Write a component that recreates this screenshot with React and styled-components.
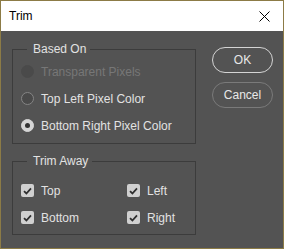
import styled, { createGlobalStyle } from 'styled-components';

const GlobalStyle = createGlobalStyle`
    html, body {
        margin: 0;
        padding: 0;
        background: #535353;
    }
    * {
        box-sizing: border-box;
    }
`;

const Window = styled.div`
    width: 284px;
    height: 249px;
    border: 1px solid #8c7b46;
    display: flex;
    flex-direction: column;
    font-family: 'Segoe UI', 'Liberation Sans', Arial, sans-serif;
    font-size: 12px;
    background: #535353;
`;

const TitleBar = styled.div`
    height: 30px;
    flex: none;
    background: #ffffff;
    display: flex;
    align-items: center;
    justify-content: space-between;
    padding: 0 9px 0 8px;
`;

const Title = styled.span`
    color: #000;
    font-size: 12px;
    line-height: 16px;
`;

const CloseButton = styled.button`
    width: 22px;
    height: 22px;
    border: none;
    background: none;
    padding: 0;
    display: flex;
    align-items: center;
    justify-content: center;
    margin-right: -1px;
`;

const Body = styled.div`
    flex: 1;
    display: flex;
    padding: 10px 10px 0 11px;
    gap: 16px;
`;

const Column = styled.div`
    width: 184px;
    display: flex;
    flex-direction: column;
    gap: 9px;
`;

const Group = styled.fieldset`
    margin: 0;
    border: 1px solid #3c3c3c;
    padding: ${(p) => p.$pad};
    min-inline-size: 0;
`;

const Legend = styled.legend`
    color: #e2e2e2;
    line-height: 16px;
    margin-left: 6px;
    padding: 0 4px 0 6px;
`;

const Row = styled.label`
    height: 27px;
    display: flex;
    align-items: center;
    gap: 7px;
    color: ${(p) => (p.$disabled ? '#777777' : '#e2e2e2')};
    white-space: nowrap;
`;

const Grid = styled.div`
    display: grid;
    grid-template-columns: 106px 1fr;
`;

const RadioDot = styled.span`
    width: 13px;
    height: 13px;
    border-radius: 50%;
    flex: none;
    display: flex;
    align-items: center;
    justify-content: center;
    border: 1px solid ${(p) => (p.$checked ? '#d6d6d6' : p.$disabled ? '#4a4a4a' : '#858585')};
    background: ${(p) => (p.$checked ? '#d6d6d6' : '#4a4a4a')};

    &::after {
        content: '';
        width: 5px;
        height: 5px;
        border-radius: 50%;
        background: #333;
        display: ${(p) => (p.$checked ? 'block' : 'none')};
    }
`;

const CheckBox = styled.span`
    width: 13px;
    height: 13px;
    border-radius: 2px;
    flex: none;
    background: #d0d0d0;
    display: flex;
    align-items: center;
    justify-content: center;
`;

const Buttons = styled.div`
    display: flex;
    flex-direction: column;
    gap: 9px;
    padding-top: 6px;
`;

const Button = styled.button`
    width: 61px;
    height: 26px;
    border-radius: 13px;
    background: transparent;
    border: 1.5px solid ${(p) => (p.$primary ? '#d4d4d4' : '#7a7a7a')};
    color: #e8e8e8;
    font-family: inherit;
    font-size: 12px;
    padding: 0;
`;

const Check = () => (
    <svg width="9" height="8" viewBox="0 0 9 8">
        <path d="M1 4.2 L3.4 6.5 L8 1.4" fill="none" stroke="#2f2f2f" strokeWidth="1.8" />
    </svg>
);

const Radio = ({ label, checked, disabled }) => (
    <Row $disabled={disabled}>
        <RadioDot $checked={checked} $disabled={disabled} />
        {label}
    </Row>
);

const CheckItem = ({ label }) => (
    <Row>
        <CheckBox>
            <Check />
        </CheckBox>
        {label}
    </Row>
);

export default function App() {
    return (
        <>
            <GlobalStyle />
            <Window>
                <TitleBar>
                    <Title>Trim</Title>
                    <CloseButton>
                        <svg width="11" height="11" viewBox="0 0 11 11">
                            <path d="M0.5 0.5 L10.5 10.5 M10.5 0.5 L0.5 10.5" stroke="#000" strokeWidth="1" />
                        </svg>
                    </CloseButton>
                </TitleBar>
                <Body>
                    <Column>
                        <Group $pad="1px 8px 4px 8px">
                            <Legend>Based On</Legend>
                            <Radio label="Transparent Pixels" disabled />
                            <Radio label="Top Left Pixel Color" />
                            <Radio label="Bottom Right Pixel Color" checked />
                        </Group>
                        <Group $pad="8px 8px 3px 8px">
                            <Legend>Trim Away</Legend>
                            <Grid>
                                <CheckItem label="Top" />
                                <CheckItem label="Left" />
                                <CheckItem label="Bottom" />
                                <CheckItem label="Right" />
                            </Grid>
                        </Group>
                    </Column>
                    <Buttons>
                        <Button $primary>OK</Button>
                        <Button>Cancel</Button>
                    </Buttons>
                </Body>
            </Window>
        </>
    );
}
